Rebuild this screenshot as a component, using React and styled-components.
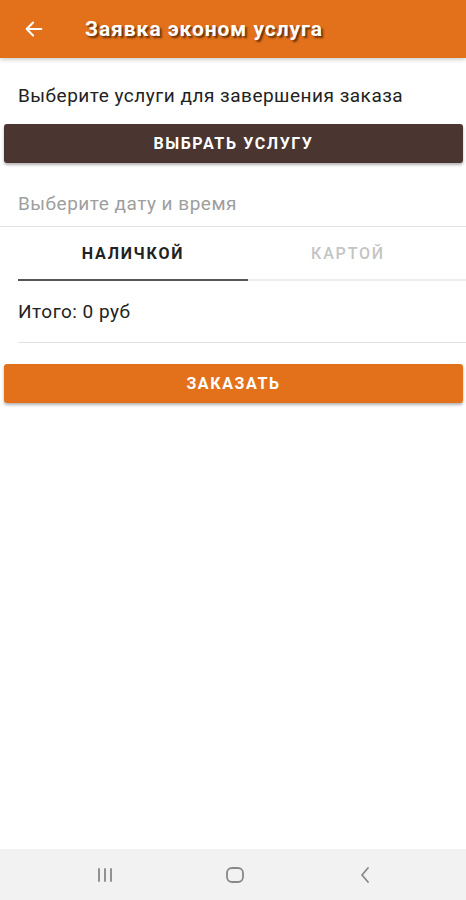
import React, { useState } from 'react';
import styled, { createGlobalStyle } from 'styled-components';

const GlobalStyle = createGlobalStyle`
  html, body {
    margin: 0;
    padding: 0;
    background: #fff;
  }
  body {
    font-family: Roboto, 'Noto Sans', 'Liberation Sans', sans-serif;
  }
`;

const Screen = styled.div`
  width: 466px;
  height: 900px;
  display: flex;
  flex-direction: column;
  background: #fff;
  overflow: hidden;
`;

const AppBar = styled.header`
  height: 58px;
  flex-shrink: 0;
  background: #e3711b;
  display: flex;
  align-items: center;
  padding: 0 0 0 22px;
  box-shadow: 0 2px 4px rgba(0, 0, 0, 0.18);
  position: relative;
  z-index: 1;
`;

const BackButton = styled.button`
  width: 24px;
  height: 24px;
  padding: 0;
  border: 0;
  background: none;
  display: flex;
  align-items: center;
  justify-content: center;
  margin-right: 39px;
`;

const Title = styled.h1`
  margin: 0;
  color: #fff;
  font-size: 21px;
  font-weight: 700;
  letter-spacing: 0.95px;
  text-shadow: 2px 2px 2px rgba(70, 30, 0, 0.8);
`;

const Content = styled.main`
  flex: 1;
  display: flex;
  flex-direction: column;
`;

const Hint = styled.p`
  margin: 0;
  padding: 27px 18px 0;
  font-size: 19px;
  letter-spacing: 0.5px;
  line-height: 22px;
  color: #222;
`;

const Button = styled.button`
  margin: 17px 3px 0 4px;
  height: 39px;
  border: 0;
  border-radius: 3px;
  background: ${(p) => (p.$accent ? '#e3711b' : '#4a3531')};
  color: #fff;
  font-family: inherit;
  font-size: 16px;
  font-weight: 700;
  letter-spacing: 1.6px;
  text-transform: uppercase;
  box-shadow: 0 2px 3px rgba(0, 0, 0, 0.3);
  cursor: pointer;
`;

const DateField = styled.div`
  height: 64px;
  padding: 18px 18px 0;
  display: flex;
  align-items: center;
  font-size: 19px;
  letter-spacing: 0.5px;
  color: #9e9e9e;
  border-bottom: 1px solid #e3e3e3;
  box-sizing: border-box;
`;

const Tabs = styled.div`
  display: flex;
  padding-left: 18px;
`;

const Tab = styled.button`
  flex: ${(p) => (p.$first ? '0 0 230px' : '1')};
  height: 54px;
  padding: 0;
  border: 0;
  background: none;
  font-family: inherit;
  font-size: 16px;
  font-weight: ${(p) => (p.$active ? 700 : 500)};
  letter-spacing: 1.8px;
  color: ${(p) => (p.$active ? '#222' : '#c4c4c4')};
  border-bottom: ${(p) => (p.$active ? '2px solid #555' : '2px solid #ececec')};
  padding-right: ${(p) => (p.$first ? '0' : '18px')};
  cursor: pointer;
`;

const Total = styled.div`
  margin-left: 18px;
  height: 62px;
  display: flex;
  align-items: center;
  font-size: 19px;
  letter-spacing: 0.5px;
  color: #222;
  border-bottom: 1px solid #e3e3e3;
  box-sizing: border-box;
`;

const OrderButton = styled(Button)`
  margin-top: 21px;
`;

const NavBar = styled.nav`
  height: 51px;
  flex-shrink: 0;
  background: #f2f2f2;
  display: grid;
  grid-template-columns: repeat(3, 130px);
  align-items: center;
  justify-items: center;
  padding: 0 0 0 40px;
`;

const NavIcon = styled.span`
  display: flex;
  align-items: center;
  justify-content: center;
`;

const ArrowBack = () => (
  <svg width="22" height="22" viewBox="0 0 24 24" fill="none">
    <path d="M20 12H5M11 5l-7 7 7 7" stroke="#fff" strokeWidth="2.2" strokeLinecap="round" strokeLinejoin="round" />
  </svg>
);

export default function App() {
  const [tab, setTab] = useState('cash');

  return (
    <>
      <GlobalStyle />
      <Screen>
        <AppBar>
          <BackButton aria-label="Назад">
            <ArrowBack />
          </BackButton>
          <Title>Заявка эконом услуга</Title>
        </AppBar>

        <Content>
          <Hint>Выберите услуги для завершения заказа</Hint>
          <Button>Выбрать услугу</Button>
          <DateField>Выберите дату и время</DateField>
          <Tabs>
            <Tab $first $active={tab === 'cash'} onClick={() => setTab('cash')}>
              НАЛИЧКОЙ
            </Tab>
            <Tab $active={tab === 'card'} onClick={() => setTab('card')}>
              КАРТОЙ
            </Tab>
          </Tabs>
          <Total>Итого: 0 руб</Total>
          <OrderButton $accent>Заказать</OrderButton>
        </Content>

        <NavBar>
          <NavIcon>
            <svg width="20" height="18" viewBox="0 0 20 18">
              <path d="M4 3v12M10 3v12M16 3v12" stroke="#888" strokeWidth="1.8" strokeLinecap="round" />
            </svg>
          </NavIcon>
          <NavIcon>
            <svg width="20" height="20" viewBox="0 0 20 20">
              <rect x="2" y="3" width="16" height="14" rx="5" fill="none" stroke="#888" strokeWidth="1.8" />
            </svg>
          </NavIcon>
          <NavIcon>
            <svg width="14" height="20" viewBox="0 0 14 20">
              <path d="M10 3L4 10l6 7" fill="none" stroke="#888" strokeWidth="1.8" strokeLinecap="round" strokeLinejoin="round" />
            </svg>
          </NavIcon>
        </NavBar>
      </Screen>
    </>
  );
}
